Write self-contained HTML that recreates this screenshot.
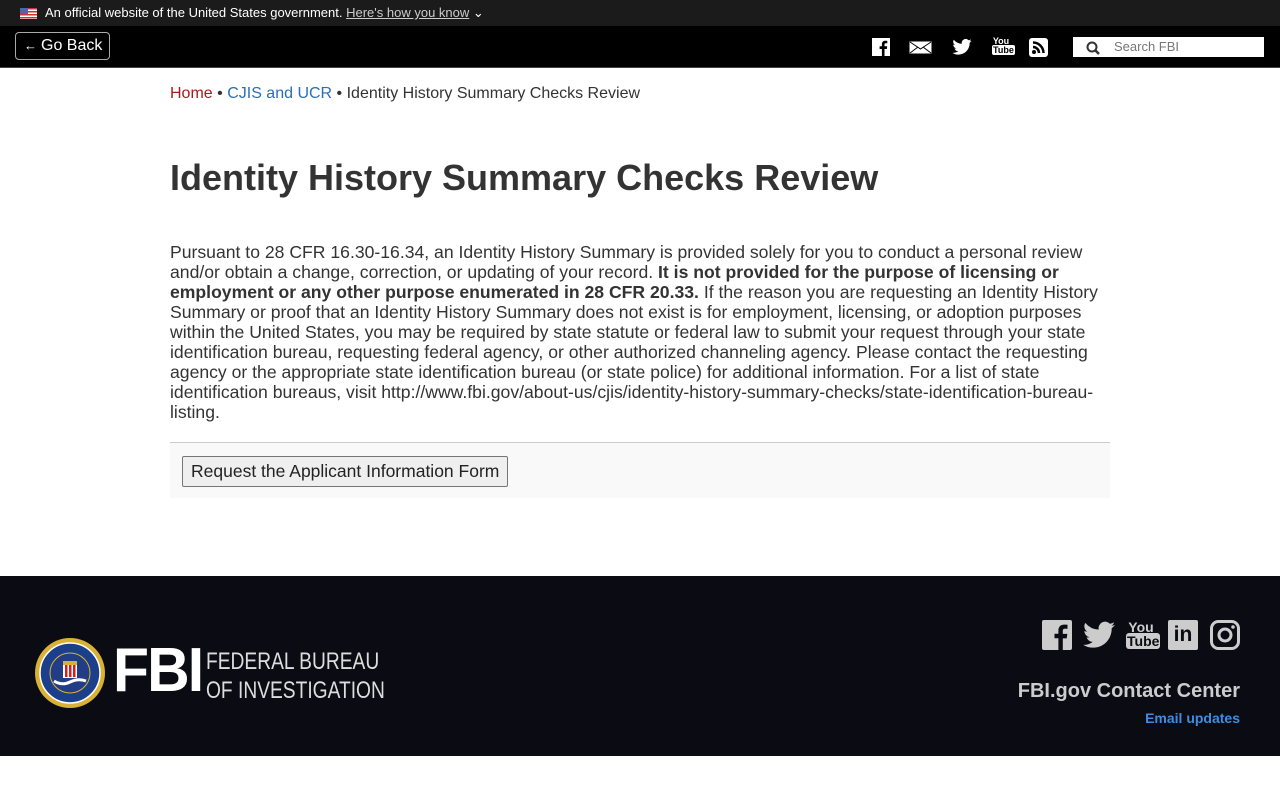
<!DOCTYPE html>
<html><head><meta charset="utf-8"><style>
*{box-sizing:border-box;margin:0;padding:0}
body{width:1280px;height:800px;background:#fff;font-family:"Liberation Sans",Arial,sans-serif;color:#333;position:relative;overflow:hidden}
.gov{position:absolute;top:0;left:0;width:1280px;height:26px;background:#1b1b1b;color:#fff;font-size:13px}
.gov .flag{position:absolute;left:20px;top:8px;width:17px;height:11px;background:repeating-linear-gradient(#c33 0 1.5px,#fff 1.5px 3px)}
.gov .flag:before{content:"";position:absolute;left:0;top:0;width:8px;height:6px;background:#5560b0}
.gov span{position:absolute;left:45px;top:5px}
.gov u{color:#ccc}
.nav{position:absolute;top:26px;left:0;width:1280px;height:42px;background:#000;border-bottom:1px solid #444}
.back{position:absolute;left:15px;top:6px;width:95px;height:28px;border:1px solid #aaa;border-radius:4px;color:#fff;font-size:16px;padding:4px 0 0 8px;white-space:nowrap}
.back small{font-size:13px;margin-right:4px}
.search{position:absolute;left:1073px;top:11px;width:191px;height:20px;background:#fff;font-size:13px;color:#777;padding:2px 0 0 41px}
.icon{position:absolute;top:12px}
.bc{position:absolute;left:170px;top:85px;font-size:16px}
h1{position:absolute;left:170px;top:157px;font-size:36px;font-weight:bold;color:#333;white-space:nowrap}
.p{position:absolute;left:170px;top:242px;width:940px;font-size:17.6px;line-height:20px;color:#333}
.box{position:absolute;left:170px;top:442px;width:940px;height:56px;background:#f9f9f9;border-top:1px solid #ccc}
.btn{position:absolute;left:12px;top:13px;width:326px;height:31px;border:1px solid #767676;border-radius:2px;background:#efefef;font-size:17.5px;padding:4px 0 0 8px;color:#222;white-space:nowrap}
.foot{position:absolute;top:576px;left:0;width:1280px;height:180px;background:#0a0b13}
</style></head><body>
<div class="gov"><div class="flag"></div><span>An official website of the United States government. <u>Here's how you know</u> ⌄</span></div>
<div class="nav">
<div class="back"><small>←</small>Go Back</div>
<svg class="icon" style="left:872px" width="18" height="18"><rect width="18" height="18" fill="#fff"/><path d="M12.5 18v-7h2.3l.4-2.7h-2.7V6.6c0-.8.3-1.3 1.4-1.3h1.4V2.9c-.3 0-1.100-.1-2-.1-2 0-3.400 1.2-3.400 3.5v2H7.6V11h2.3v7z" fill="#000"/></svg>
<svg class="icon" style="left:909px;top:15px" width="23" height="13"><rect x=".5" y=".5" width="22" height="12" fill="#fff"/><path d="M1 1l10.5 7L22 1M1 12l8-6M22 12l-8-6" stroke="#000" fill="none"/></svg>
<svg class="icon" style="left:952px;top:13px" width="20" height="16" viewBox="0 0 24 20"><path d="M24 2.4a10 10 0 0 1-2.8.8A5 5 0 0 0 23.3.4a10 10 0 0 1-3.1 1.2A4.9 4.9 0 0 0 11.8 6 14 14 0 0 1 1.7.9a4.9 4.9 0 0 0 1.5 6.6A4.9 4.9 0 0 1 1 6.9a4.9 4.9 0 0 0 3.9 4.8 4.9 4.9 0 0 1-2.2.1 4.9 4.9 0 0 0 4.6 3.4A9.9 9.9 0 0 1 0 17.3 14 14 0 0 0 7.5 19.5c9.1 0 14-7.5 14-14v-.6A10 10 0 0 0 24 2.4z" fill="#fff"/></svg>
<div class="icon" style="left:992px;top:11px;color:#fff;font:bold 9px 'Liberation Sans';line-height:9px;text-align:center;width:18px">You<br><span style="background:#fff;color:#000;border-radius:2px;padding:0 1px">Tube</span></div>
<svg class="icon" style="left:1029px;top:12px" width="19" height="19"><rect width="19" height="19" rx="3" fill="#fff"/><circle cx="5" cy="14" r="2" fill="#000"/><path d="M4 9a6 6 0 0 1 6 6M4 4.5a10.5 10.5 0 0 1 10.5 10.5" stroke="#000" stroke-width="2.5" fill="none"/></svg>
<div class="search"><svg style="position:absolute;left:13px;top:4px" width="14" height="14"><circle cx="6" cy="6" r="4.5" stroke="#333" stroke-width="2" fill="none"/><path d="M9.5 9.5l3.5 3.5" stroke="#333" stroke-width="2.5"/></svg>Search FBI</div>
</div>
<div class="bc"><span style="color:#a41c1c">Home</span> • <span style="color:#2a6ebb">CJIS and UCR</span> • Identity History Summary Checks Review</div>
<h1>Identity History Summary Checks Review</h1>
<div class="p">Pursuant to 28 CFR 16.30-16.34, an Identity History Summary is provided solely for you to conduct a personal review and/or obtain a change, correction, or updating of your record. <b>It is not provided for the purpose of licensing or employment or any other purpose enumerated in 28 CFR 20.33.</b> If the reason you are requesting an Identity History Summary or proof that an Identity History Summary does not exist is for employment, licensing, or adoption purposes within the United States, you may be required by state statute or federal law to submit your request through your state identification bureau, requesting federal agency, or other authorized channeling agency. Please contact the requesting agency or the appropriate state identification bureau (or state police) for additional information. For a list of state identification bureaus, visit http://www.fbi.gov/about-us/cjis/identity-history-summary-checks/state-identification-bureau-listing.</div>
<div class="box"><div class="btn">Request the Applicant Information Form</div></div>
<div class="foot">
<svg style="position:absolute;left:34px;top:61px" width="72" height="72"><circle cx="36" cy="36" r="35" fill="#d9b233"/><circle cx="36" cy="36" r="30" fill="#1c3f8c" stroke="#fff" stroke-width="1.5"/><circle cx="36" cy="36" r="20" fill="#213d86" stroke="#d9b233"/><rect x="29" y="24" width="14" height="17" fill="#fff"/><rect x="31" y="28" width="2.5" height="12" fill="#c22"/><rect x="35" y="28" width="2.5" height="12" fill="#c22"/><rect x="39" y="28" width="2.5" height="12" fill="#c22"/><rect x="29" y="24" width="14" height="4" fill="#d9b233"/><path d="M20 44q8 5 16 1t16-1" stroke="#fff" stroke-width="3" fill="none"/></svg>
<div style="position:absolute;left:113px;top:64px;color:#fff;font:bold 62px/62px 'Liberation Sans';letter-spacing:-2px;transform:scaleX(.95);transform-origin:left">FBI</div>
<div style="position:absolute;left:206px;top:71px;color:#ddd;font:24px/29px 'Liberation Sans';transform:scaleX(.8);transform-origin:left;white-space:nowrap">FEDERAL BUREAU<br>OF INVESTIGATION</div>
<svg style="position:absolute;left:1042px;top:44px" width="30" height="30"><rect width="30" height="30" rx="2" fill="#ccc"/><path d="M20.8 30V18.4h3.9l.6-4.5h-4.5v-2.9c0-1.3.4-2.2 2.3-2.2h2.4V4.8c-.4-.1-1.8-.2-3.4-.2-3.4 0-5.7 2.1-5.7 5.9v3.3h-3.9v4.5h3.9V30z" fill="#0a0b13"/></svg>
<svg style="position:absolute;left:1083px;top:45px" width="32" height="28" viewBox="0 0 24 20"><path d="M24 2.4a10 10 0 0 1-2.8.8A5 5 0 0 0 23.3.4a10 10 0 0 1-3.1 1.2A4.9 4.9 0 0 0 11.8 6 14 14 0 0 1 1.7.9a4.9 4.9 0 0 0 1.5 6.6A4.9 4.9 0 0 1 1 6.9a4.9 4.9 0 0 0 3.9 4.8 4.9 4.9 0 0 1-2.2.1 4.9 4.9 0 0 0 4.6 3.4A9.9 9.9 0 0 1 0 17.3 14 14 0 0 0 7.5 19.5c9.1 0 14-7.5 14-14v-.6A10 10 0 0 0 24 2.4z" fill="#ccc"/></svg>
<div style="position:absolute;left:1126px;top:44px;width:30px;color:#ccc;font:bold 14px/14px 'Liberation Sans';text-align:center">You<br><span style="background:#ccc;color:#0a0b13;border-radius:3px;padding:0 1px">Tube</span></div>
<div style="position:absolute;left:1168px;top:44px;width:30px;height:30px;background:#ccc;border-radius:2px;color:#0a0b13;font:bold 21px/30px 'Liberation Sans';text-align:center">in</div>
<svg style="position:absolute;left:1210px;top:44px" width="30" height="30"><rect x="1.5" y="1.5" width="27" height="27" rx="7" stroke="#ccc" stroke-width="3" fill="none"/><circle cx="15" cy="15" r="6" stroke="#ccc" stroke-width="3" fill="none"/><circle cx="23" cy="7" r="1.8" fill="#ccc"/></svg>
<div style="position:absolute;right:40px;top:104px;color:#ccc;font:bold 20px 'Liberation Sans'">FBI.gov Contact Center</div>
<div style="position:absolute;right:40px;top:134px;color:#3a8ee6;font:bold 14px 'Liberation Sans'">Email updates</div>
</div>
</body></html>
